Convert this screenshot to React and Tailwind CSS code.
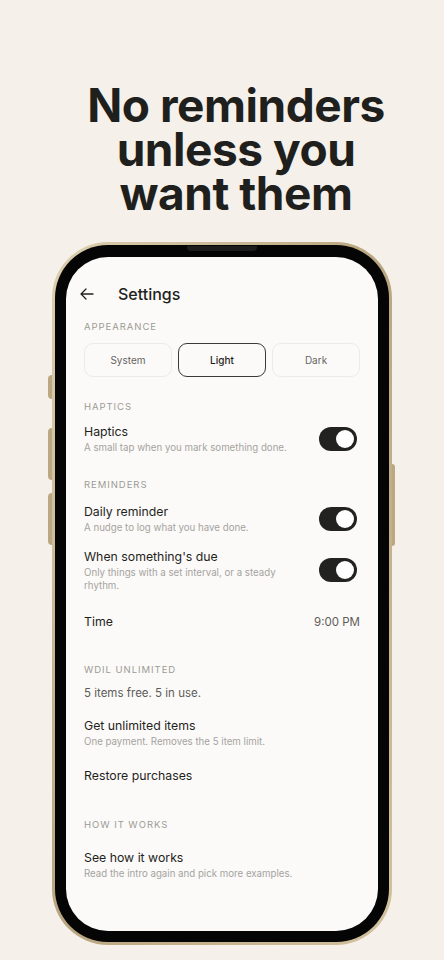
import React from "react";

const F = { fontFamily: "Inter, 'Noto Sans', sans-serif" };

function Toggle() {
  return (
    <div className="mr-[3px] w-[38px] h-[24px] rounded-full bg-[#222220] flex items-center justify-end pr-[3px] shrink-0">
      <div className="w-[18px] h-[18px] rounded-full bg-white" />
    </div>
  );
}

function Label({ children, className = "" }) {
  return (
    <div className={"text-[9.5px] leading-[14px] tracking-[0.1em] text-[#9c9a96] " + className}>
      {children}
    </div>
  );
}

function Title({ children }) {
  return <div className="text-[12.3px] leading-[18px] text-[#1f1f1d]">{children}</div>;
}

function Sub({ children }) {
  return <div className="text-[9.7px] leading-[14px] text-[#a5a39f]">{children}</div>;
}

export default function App() {
  return (
    <div style={F} className="w-[444px] h-[960px] bg-[#f5f1ea] overflow-hidden flex flex-col items-center">
      <h1 className="pt-[83px] pl-[28px] text-center text-[46px] leading-[44px] font-bold tracking-[-0.01em] text-[#1f1f1d]">
        No reminders
        <br />
        unless you
        <br />
        want them
      </h1>

      <div className="relative mt-[27px] w-[340px] h-[703px] rounded-[56px] bg-gradient-to-br from-[#ddd0b0] via-[#b9a57f] to-[#d3c29e] p-[3px]">
        {/* side buttons */}
        <div className="absolute left-[-4px] top-[133px] w-[4px] h-[24px] rounded-l bg-[#bba883]" />
        <div className="absolute left-[-4px] top-[186px] w-[4px] h-[52px] rounded-l bg-[#bba883]" />
        <div className="absolute left-[-4px] top-[251px] w-[4px] h-[52px] rounded-l bg-[#bba883]" />
        <div className="absolute right-[-3px] top-[222px] w-[3px] h-[82px] rounded-r bg-[#bba883]" />

        <div className="relative w-full h-full rounded-[53px] bg-[#050505] p-[11px] pt-[12px]">
          <div className="absolute top-[1px] left-1/2 -translate-x-1/2 w-[70px] h-[5px] rounded-b-[4px] bg-[#1c1c1c]" />
          <div className="w-full h-full rounded-[42px] bg-[#fbfaf8] overflow-hidden">
            {/* header */}
            <div className="pt-[25px] pl-[14px] flex items-center h-[49px]">
              <svg width="14" height="12" viewBox="0 0 14 12" fill="none" stroke="#222" strokeWidth="1.3" strokeLinecap="round" strokeLinejoin="round">
                <path d="M13 6H1.2M6 1L1 6l5 5" />
              </svg>
              <div className="ml-[24px] text-[16px] leading-[24px] font-medium text-[#1f1f1d]">Settings</div>
            </div>

            <div className="px-[18px]">
              <Label className="mt-[14px]">APPEARANCE</Label>
              <div className="mt-[9px] flex gap-[6px]">
                <div className="flex-1 h-[34px] rounded-[9px] border border-[#ecebe8] flex items-center justify-center text-[10px] text-[#66645f]">System</div>
                <div className="flex-1 h-[34px] rounded-[9px] border border-[#3a3936] flex items-center justify-center text-[10px] font-medium text-[#1f1f1d]">Light</div>
                <div className="flex-1 h-[34px] rounded-[9px] border border-[#ecebe8] flex items-center justify-center text-[10px] text-[#66645f]">Dark</div>
              </div>

              <Label className="mt-[23px]">HAPTICS</Label>
              <div className="mt-[9px] flex items-center justify-between">
                <div>
                  <Title>Haptics</Title>
                  <Sub>A small tap when you mark something done.</Sub>
                </div>
                <Toggle />
              </div>

              <Label className="mt-[23px]">REMINDERS</Label>
              <div className="mt-[11px] flex items-center justify-between">
                <div>
                  <Title>Daily reminder</Title>
                  <Sub>A nudge to log what you have done.</Sub>
                </div>
                <Toggle />
              </div>
              <div className="mt-[13px] flex items-center justify-between">
                <div className="w-[210px]">
                  <Title>When something's due</Title>
                  <div className="text-[9.7px] leading-[13px] text-[#a5a39f]">
                    Only things with a set interval, or a steady rhythm.
                  </div>
                </div>
                <Toggle />
              </div>

              <div className="mt-[21px] flex items-center justify-between">
                <Title>Time</Title>
                <div className="text-[11.5px] leading-[18px] text-[#5e5c58]">9:00 PM</div>
              </div>

              <Label className="mt-[32px]">WDIL UNLIMITED</Label>
              <div className="mt-[8px] text-[11.5px] leading-[16px] text-[#5e5c58]">5 items free. 5 in use.</div>

              <div className="mt-[16px]">
                <Title>Get unlimited items</Title>
                <Sub>One payment. Removes the 5 item limit.</Sub>
              </div>
              <div className="mt-[18px]">
                <Title>Restore purchases</Title>
              </div>

              <Label className="mt-[33px]">HOW IT WORKS</Label>
              <div className="mt-[17px]">
                <Title>See how it works</Title>
                <Sub>Read the intro again and pick more examples.</Sub>
              </div>
            </div>
          </div>
        </div>
      </div>
    </div>
  );
}
